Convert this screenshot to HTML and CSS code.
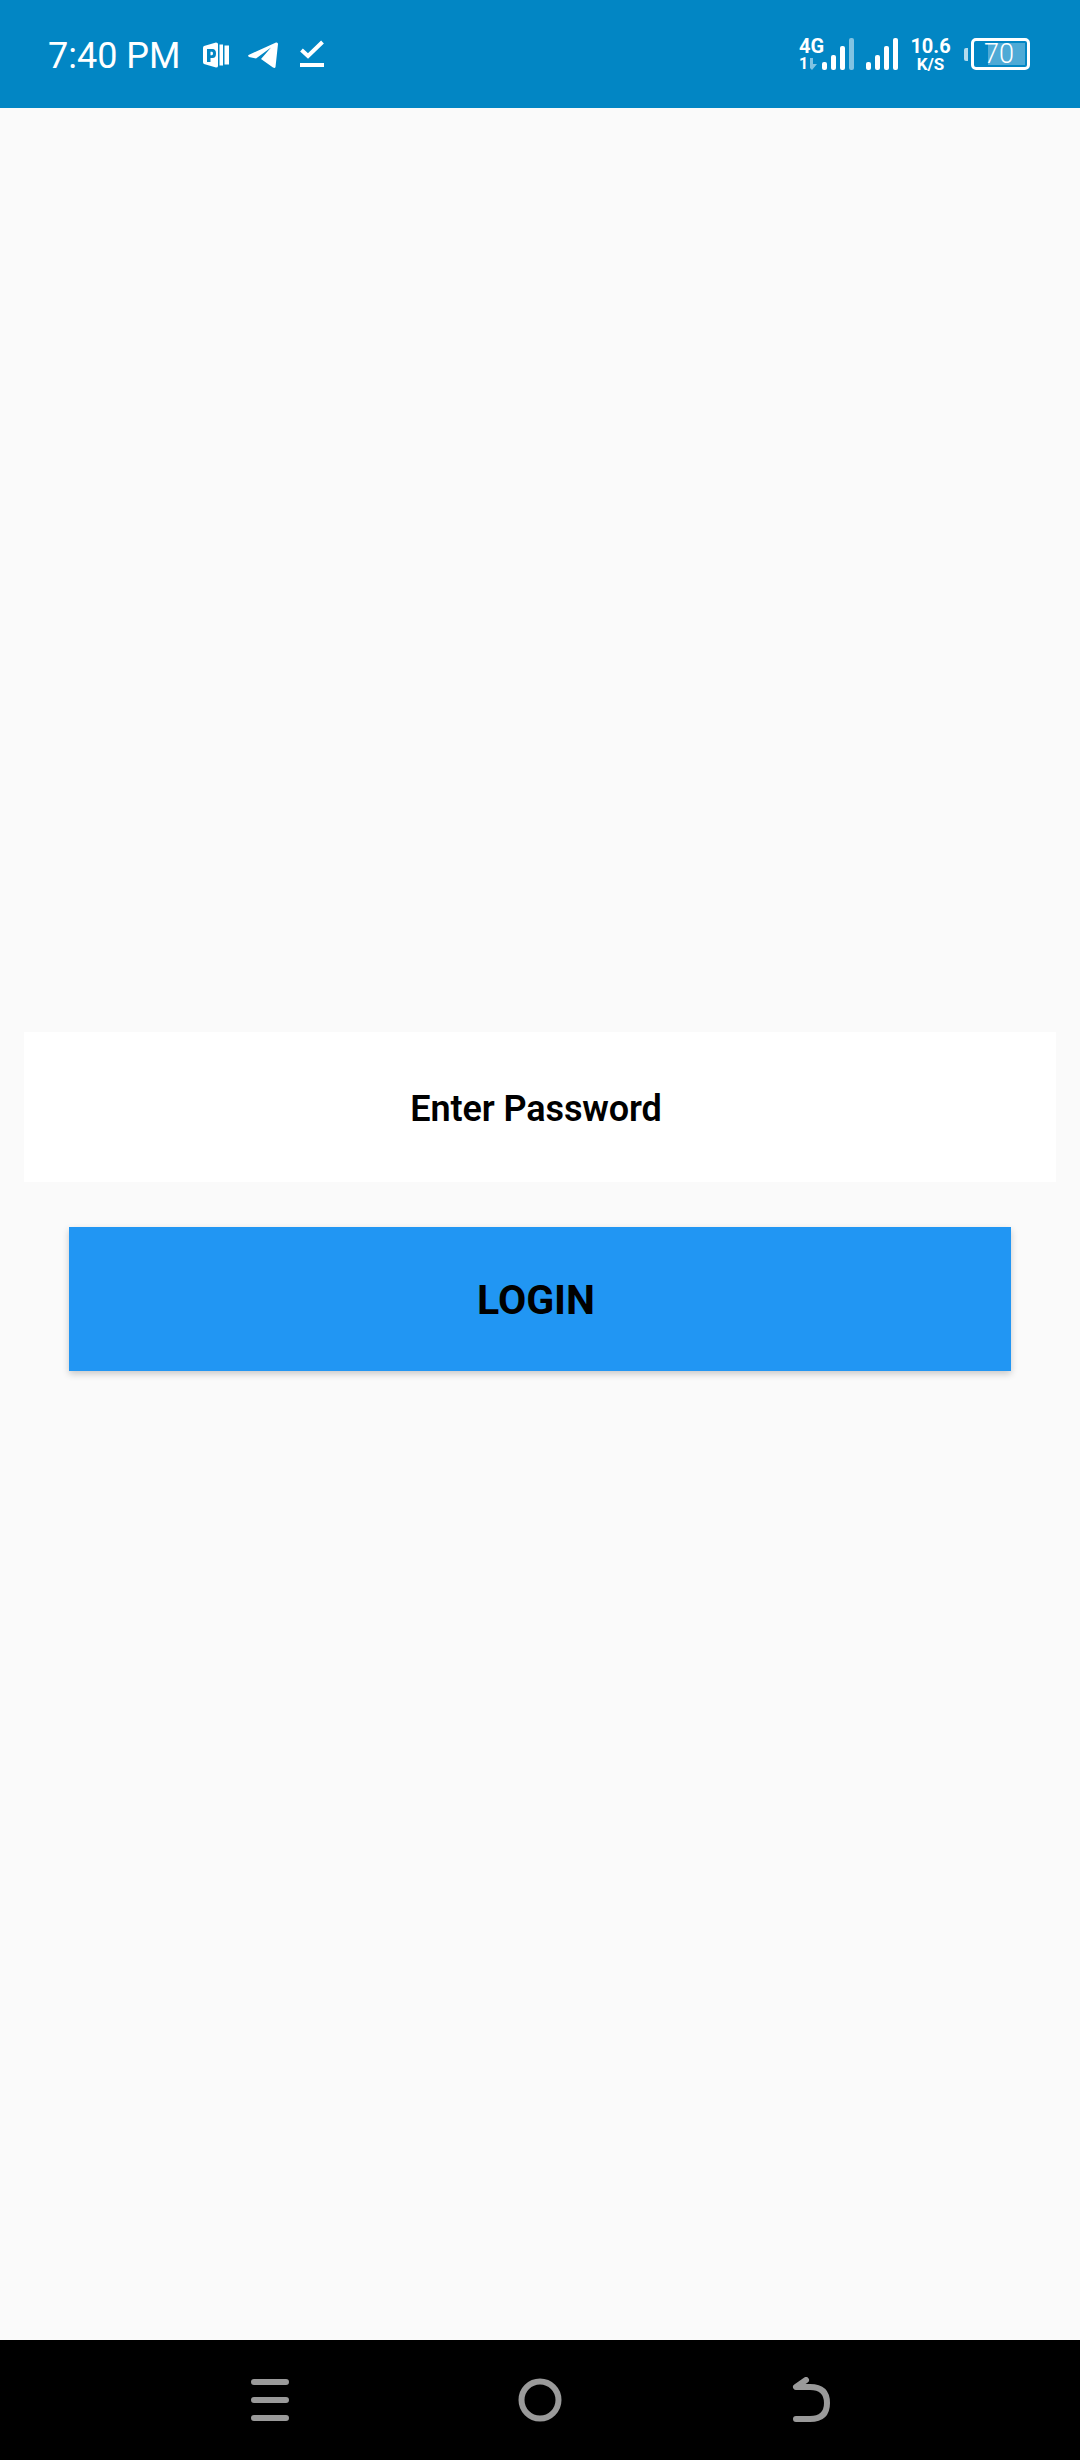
FILE: index.html
```html
<!DOCTYPE html>
<html lang="en">
<head>
    <meta charset="UTF-8">
    <meta name="viewport" content="width=device-width, initial-scale=1.0">
    <title>Login</title>
    <link rel="stylesheet" href="styles.css">
</head>
<body>
    <div class="status-bar">
        <div class="status-left">
            <span class="clock">7:40 PM</span>
            <svg class="icon-pub" width="26" height="26" viewBox="0 0 26 26">
                <path fill="#fff" fill-rule="evenodd" d="M1 4 L13 0.5 Q15 0.5 15 2 V24 Q15 25.5 13 25.5 L1 22 Q0 21.5 0 20 V6 Q0 4.5 1 4 Z M4 7 V20 H7.5 V16 H9.5 Q13 16 13 11.5 Q13 7 9.5 7 Z M7.5 9.7 H9 Q10 9.7 10 11.5 Q10 13.3 9 13.3 H7.5 Z"/>
                <path fill="#fff" d="M16.5 2.5 H20 V23.5 H16.5 Z M21.5 3.5 H26 V22.5 H21.5 Z"/>
            </svg>
            <svg class="icon-telegram" width="30" height="26" viewBox="0 0 30 26">
                <path fill="#fff" d="M0.5 13 L28 0.5 Q30 0 30 2 L27.5 25 Q27 26.5 25 25.5 L13 17 L23 5.5 L8 16.5 L1 15 Q-0.5 14 0.5 13 Z"/>
            </svg>
            <svg class="icon-task" width="24" height="28" viewBox="0 0 24 28">
                <path fill="none" stroke="#fff" stroke-width="4" d="M1.5 10 L8 16 L22.5 2"/>
                <rect x="0" y="23" width="24" height="4" fill="#fff"/>
            </svg>
        </div>
        <div class="status-right">
            <div class="net-type">
                <span class="net-name">4G</span>
                <div class="net-sim">
                    <span>1</span>
                    <svg width="8" height="12" viewBox="0 0 8 12"><path fill="#fff" opacity="0.5" d="M0 0 H3 V6 H7 L2 12 L0 10 Z"/></svg>
                </div>
            </div>
            <div class="signal first">
                <i class="b1"></i><i class="b2"></i><i class="b3"></i><i class="b4 dim"></i>
            </div>
            <div class="signal second">
                <i class="b1"></i><i class="b2"></i><i class="b3"></i><i class="b4"></i>
            </div>
            <div class="speed">
                <span class="speed-num">10.6</span>
                <span class="speed-unit">K/S</span>
            </div>
            <div class="battery">
                <div class="battery-nub"></div>
                <div class="battery-body">
                    <div class="battery-fill"></div>
                    <span class="battery-text">70</span>
                </div>
            </div>
        </div>
    </div>

    <div class="content">
        <div class="password-box">Enter Password</div>
        <button class="login-btn" type="button">LOGIN</button>
    </div>

    <div class="nav-bar">
        <svg width="40" height="44" viewBox="0 0 40 44">
            <path fill="none" stroke="#9a9a9a" stroke-width="6" stroke-linecap="round" d="M4 4 H36 M4 22 H36 M4 40 H36"/>
        </svg>
        <svg width="44" height="44" viewBox="0 0 44 44">
            <circle cx="22" cy="22" r="18.5" fill="none" stroke="#9a9a9a" stroke-width="6"/>
        </svg>
        <svg class="icon-back" width="40" height="46" viewBox="0 0 40 46">
            <path fill="none" stroke="#9a9a9a" stroke-width="6" stroke-linecap="round" stroke-linejoin="round" d="M14 3 L4 10 H18 Q35 10 35 26 Q35 42 18 42 H4"/>
        </svg>
    </div>
</body>
</html>
```

FILE: styles.css
```css
body {
    margin: 0;
    height: 2460px;
    display: flex;
    flex-direction: column;
    font-family: Roboto, sans-serif;
    background-color: #fafafa;
}
.status-bar {
    height: 108px;
    flex-shrink: 0;
    display: flex;
    justify-content: space-between;
    align-items: center;
    padding: 0 50px 0 48px;
    background-color: #0286c4;
    color: white;
}
.status-left {
    display: flex;
    align-items: center;
}
.clock {
    font-size: 36px;
    line-height: 42px;
    margin: 4px 25px 0 0;
}
.icon-pub {
    margin-left: -3px;
    margin-top: 2px;
}
.icon-telegram {
    margin-left: 19px;
    margin-top: 2px;
}
.icon-task {
    margin-left: 22px;
}
.status-right {
    display: flex;
    align-items: center;
}
.net-type {
    width: 24px;
    display: flex;
    flex-direction: column;
    font-weight: 700;
}
.net-name {
    font-size: 20px;
    line-height: 20px;
}
.net-sim {
    display: flex;
    align-items: center;
    font-size: 16px;
    line-height: 16px;
}
.net-sim svg {
    margin-left: 2px;
}
.signal {
    height: 32px;
    display: flex;
    align-items: flex-end;
    gap: 4px;
}
.signal.first {
    margin-left: -1px;
}
.signal.second {
    margin-left: 12px;
}
.signal i {
    display: block;
    width: 5px;
    background-color: white;
    border-radius: 2px;
}
.signal .b1 { height: 8px; }
.signal .b2 { height: 15px; }
.signal .b3 { height: 24px; }
.signal .b4 { height: 32px; }
.signal .dim { opacity: 0.5; }
.speed {
    margin-left: 14px;
    width: 37px;
    display: flex;
    flex-direction: column;
    align-items: center;
    font-weight: 700;
}
.speed-num {
    font-size: 20px;
    line-height: 20px;
}
.speed-unit {
    font-size: 17px;
    line-height: 16px;
}
.battery {
    margin-left: 15px;
    display: flex;
    align-items: center;
}
.battery-nub {
    width: 4px;
    height: 13px;
    margin-right: 3px;
    background-color: rgba(255,255,255,0.7);
    border-radius: 2px 0 0 2px;
}
.battery-body {
    position: relative;
    box-sizing: border-box;
    width: 59px;
    height: 32px;
    border: 3px solid white;
    border-radius: 5px;
}
.battery-fill {
    position: absolute;
    top: 2px;
    right: 2px;
    bottom: 2px;
    width: 37px;
    background-color: rgba(255,255,255,0.3);
}
.battery-text {
    position: absolute;
    left: 10px;
    top: 0;
    font-size: 27px;
    line-height: 26px;
    font-weight: 300;
}
.content {
    flex: 1;
    padding-top: 924px;
}
.password-box {
    height: 150px;
    margin: 0 24px;
    padding: 3px 8px 0 0;
    box-sizing: border-box;
    display: flex;
    justify-content: center;
    align-items: center;
    background-color: white;
    color: black;
    font-size: 36px;
    font-weight: 600;
    letter-spacing: -0.1px;
}
.login-btn {
    display: block;
    box-sizing: border-box;
    width: 942px;
    height: 144px;
    margin: 45px 0 0 69px;
    padding: 2px 8px 0 0;
    border: none;
    background-color: #2196f3;
    color: black;
    font-family: Roboto, sans-serif;
    font-size: 41px;
    font-weight: 700;
    box-shadow: 0 3px 7px rgba(0,0,0,0.2);
}
.nav-bar {
    height: 120px;
    flex-shrink: 0;
    padding: 0 135px;
    display: grid;
    grid-template-columns: repeat(3, 1fr);
    justify-items: center;
    align-items: center;
    background-color: black;
}
.icon-back {
    margin-left: 3px;
}
```
